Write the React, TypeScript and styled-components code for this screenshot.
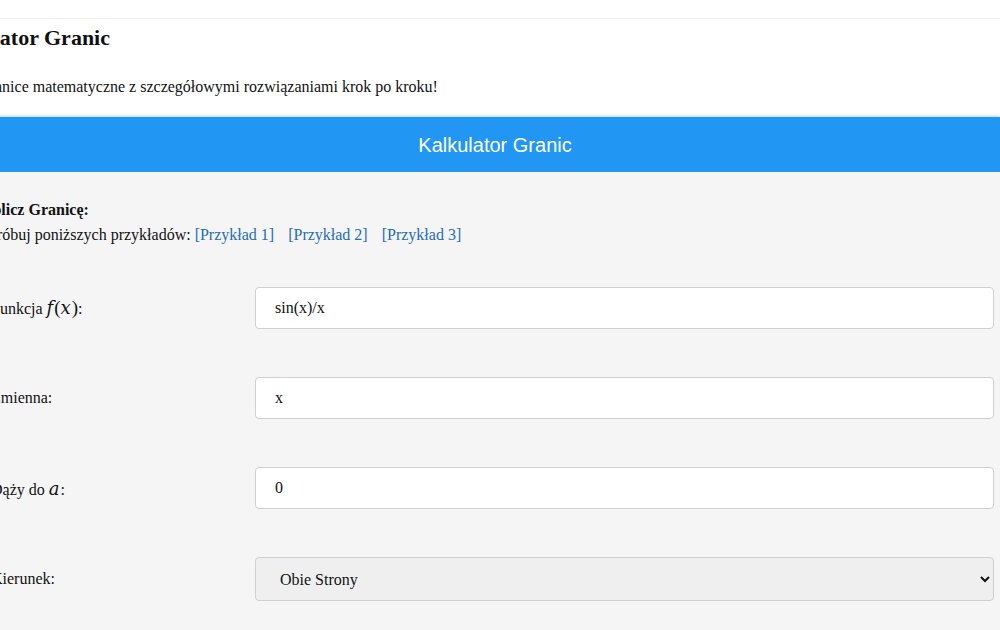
import React from 'react';
import styled, { createGlobalStyle } from 'styled-components';

const GlobalStyle = createGlobalStyle`
  html, body {
    margin: 0;
    padding: 0;
    background: #f5f5f5;
    overflow: hidden;
  }
  body {
    font-family: "Liberation Serif", "Times New Roman", serif;
    font-size: 16px;
    color: #111;
  }
`;

const Page = styled.div`
  width: 1000px;
  min-height: 630px;
  overflow: hidden;
`;

const TopBar = styled.div`
  height: 18px;
  background: #fff;
  border-bottom: 1px solid #efefef;
`;

const Header = styled.header`
  background: #fff;
  padding: 6px 0 20px;
  margin-left: -65px;
`;

const Title = styled.h1`
  margin: 0;
  font-size: 22px;
  line-height: 25px;
  font-weight: bold;
`;

const Lead = styled.p`
  margin: 27px 0 0;
  font-size: 16px;
  line-height: 20px;
`;

const Banner = styled.div`
  height: 55px;
  margin-left: -10px;
  background: #2196f3;
  box-shadow: 0 -1px 3px rgba(33, 150, 243, 0.35);
  display: flex;
  align-items: center;
  justify-content: center;
  color: #fff;
  font-family: "Liberation Sans", Arial, sans-serif;
  font-size: 20px;
  padding-top: 2px;
  box-sizing: border-box;
`;

const Section = styled.section`
  background: #f5f5f5;
  margin-left: -20px;
  padding: 25px 6px 30px 0;
`;

const Intro = styled.div`
  line-height: 25px;
`;

const SectionTitle = styled.div`
  font-weight: bold;
`;

const ExampleLink = styled.a`
  color: #1f6db5;
  text-decoration: none;
  margin-left: 4px;
  margin-right: 10px;
  cursor: pointer;
`;

const Form = styled.div`
  display: flex;
  flex-direction: column;
  gap: 48px;
  margin-top: 40px;
  padding-left: 11px;
`;

const Row = styled.div`
  display: grid;
  grid-template-columns: 264px 1fr;
  align-items: center;
`;

const Label = styled.label`
  font-size: 16px;
`;

const MathVar = styled.span`
  font-style: italic;
  font-family: "DejaVu Serif", "Liberation Serif", serif;
  font-size: 18px;
  margin-right: 1px;
`;

const Paren = styled.span`
  font-size: 19px;
`;

const Field = styled.input`
  box-sizing: border-box;
  width: 100%;
  height: 42px;
  padding: 0 19px;
  border: 1px solid #cfcfcf;
  border-radius: 4px;
  background: #fff;
  font-family: "Liberation Serif", "Times New Roman", serif;
  font-size: 16px;
  color: #111;
  outline: none;
`;

const Select = styled.select`
  box-sizing: border-box;
  width: 100%;
  height: 44px;
  padding: 0 16px 0 20px;
  border: 1px solid #cfcfcf;
  border-radius: 4px;
  background: #efefef;
  font-family: "Liberation Serif", "Times New Roman", serif;
  font-size: 16px;
  color: #111;
`;

export default function App() {
  return (
    <Page>
      <GlobalStyle />
      <TopBar />
      <Header>
        <Title>Kalkulator Granic</Title>
        <Lead>Oblicz granice matematyczne z szczegółowymi rozwiązaniami krok po kroku!</Lead>
      </Header>
      <Banner>Kalkulator Granic</Banner>
      <Section>
        <Intro>
          <SectionTitle>Oblicz Granicę:</SectionTitle>
          <div>
            Spróbuj poniższych przykładów:
            <ExampleLink>[Przykład 1]</ExampleLink>
            <ExampleLink>[Przykład 2]</ExampleLink>
            <ExampleLink>[Przykład 3]</ExampleLink>
          </div>
        </Intro>
        <Form>
          <Row>
            <Label>
              Funkcja <MathVar>f</MathVar><Paren>(</Paren><MathVar>x</MathVar><Paren>)</Paren>:
            </Label>
            <Field defaultValue="sin(x)/x" />
          </Row>
          <Row>
            <Label>Zmienna:</Label>
            <Field defaultValue="x" />
          </Row>
          <Row>
            <Label>
              Dąży do <MathVar>a</MathVar>:
            </Label>
            <Field defaultValue="0" />
          </Row>
          <Row>
            <Label>Kierunek:</Label>
            <Select defaultValue="both">
              <option value="both">Obie Strony</option>
              <option value="left">Lewostronna</option>
              <option value="right">Prawostronna</option>
            </Select>
          </Row>
        </Form>
      </Section>
    </Page>
  );
}
